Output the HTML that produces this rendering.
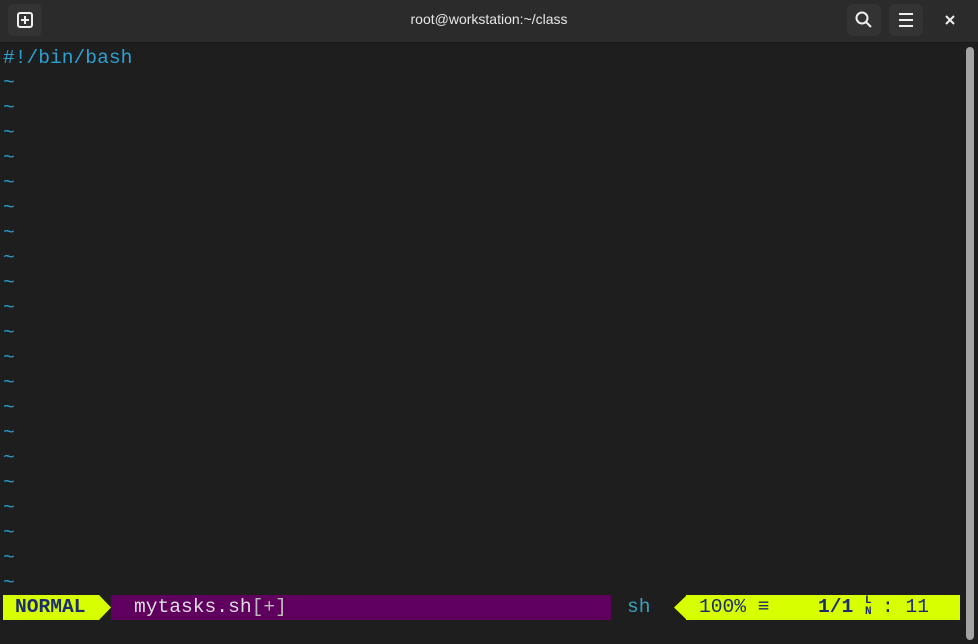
<!DOCTYPE html><html><head><style>
body{margin:0;width:978px;height:644px;background:#1e1e1e;overflow:hidden;position:relative;font-family:"Liberation Mono",monospace}
.hdr{position:absolute;left:0;top:0;width:978px;height:42px;background:#2b2b2b;border-bottom:1px solid #181818}
.btn{position:absolute;top:4px;width:34px;height:32px;background:#333;border-radius:6px}
.title{position:absolute;top:11px;width:978px;text-align:center;color:#e6e6e6;font:14px "Liberation Sans",sans-serif}
.ln{position:absolute;left:3px;font-size:19.6px;color:#2d9fd0;line-height:25px}
.sb{position:absolute;left:966px;top:47px;width:8px;height:593px;background:#a4a4a4;border-radius:4px}
.st{position:absolute;top:595px;height:25px;font-size:19.6px;line-height:25px}
</style></head><body>
<div class="hdr">
<div class="btn" style="left:8px"><svg width="34" height="32"><rect x="10" y="9" width="14" height="14" rx="2" fill="none" stroke="#eee" stroke-width="2"/><path d="M17 12v8M13 16h8" stroke="#eee" stroke-width="2"/></svg></div>
<div class="title">root@workstation:~/class</div>
<div class="btn" style="left:847px"><svg width="34" height="32"><circle cx="15" cy="14" r="5.5" fill="none" stroke="#eee" stroke-width="2"/><path d="M19 18l5 5" stroke="#eee" stroke-width="2"/></svg></div>
<div class="btn" style="left:889px"><svg width="34" height="32"><path d="M10 10h14M10 16h14M10 22h14" stroke="#eee" stroke-width="2"/></svg></div>
<svg style="position:absolute;left:940px;top:10px" width="20" height="20"><path d="M6 6l8 8M14 6l-8 8" stroke="#eee" stroke-width="2"/></svg>
</div>
<div class="ln" style="top:46px">#!/bin/bash</div>
<div class="ln" style="top:71px;line-height:25px">~<br>~<br>~<br>~<br>~<br>~<br>~<br>~<br>~<br>~<br>~<br>~<br>~<br>~<br>~<br>~<br>~<br>~<br>~<br>~<br>~</div>
<div class="st" style="left:3px;width:96px;background:#d7ff00;color:#1c2a70;font-weight:bold;padding-left:12px;box-sizing:border-box">NORMAL</div>
<svg class="st" style="left:99px" width="12" height="25"><polygon points="0,0 12,12.5 0,25" fill="#d7ff00"/></svg>
<div class="st" style="left:111px;width:500px;background:#5f005f;color:#ddd;padding-left:23px;box-sizing:border-box">mytasks.sh<span style="color:#bbb">[+]</span></div>
<svg class="st" style="left:600px" width="12" height="25"><polygon points="0,0 12,0 0,12.5 12,25 0,25" fill="#5f005f"/></svg>
<div class="st" style="left:627px;color:#3aa0c0">sh</div>
<div class="st" style="left:686px;width:274px;background:#d7ff00;color:#1c2a70"></div>
<svg class="st" style="left:674px" width="13" height="25"><polygon points="13,0 0,12.5 13,25" fill="#d7ff00"/></svg>
<div class="st" style="left:699px;color:#1c2a70">100% <b>≡</b></div>
<div class="st" style="left:818px;color:#1c2a70;font-weight:bold">1/1 <span style="font-size:11px;line-height:11px;display:inline-block;vertical-align:middle;width:12px">L<br>N</span></div>
<div class="st" style="left:882px;color:#1c2a70">: 11</div>
<div class="sb"></div>
</body></html>
